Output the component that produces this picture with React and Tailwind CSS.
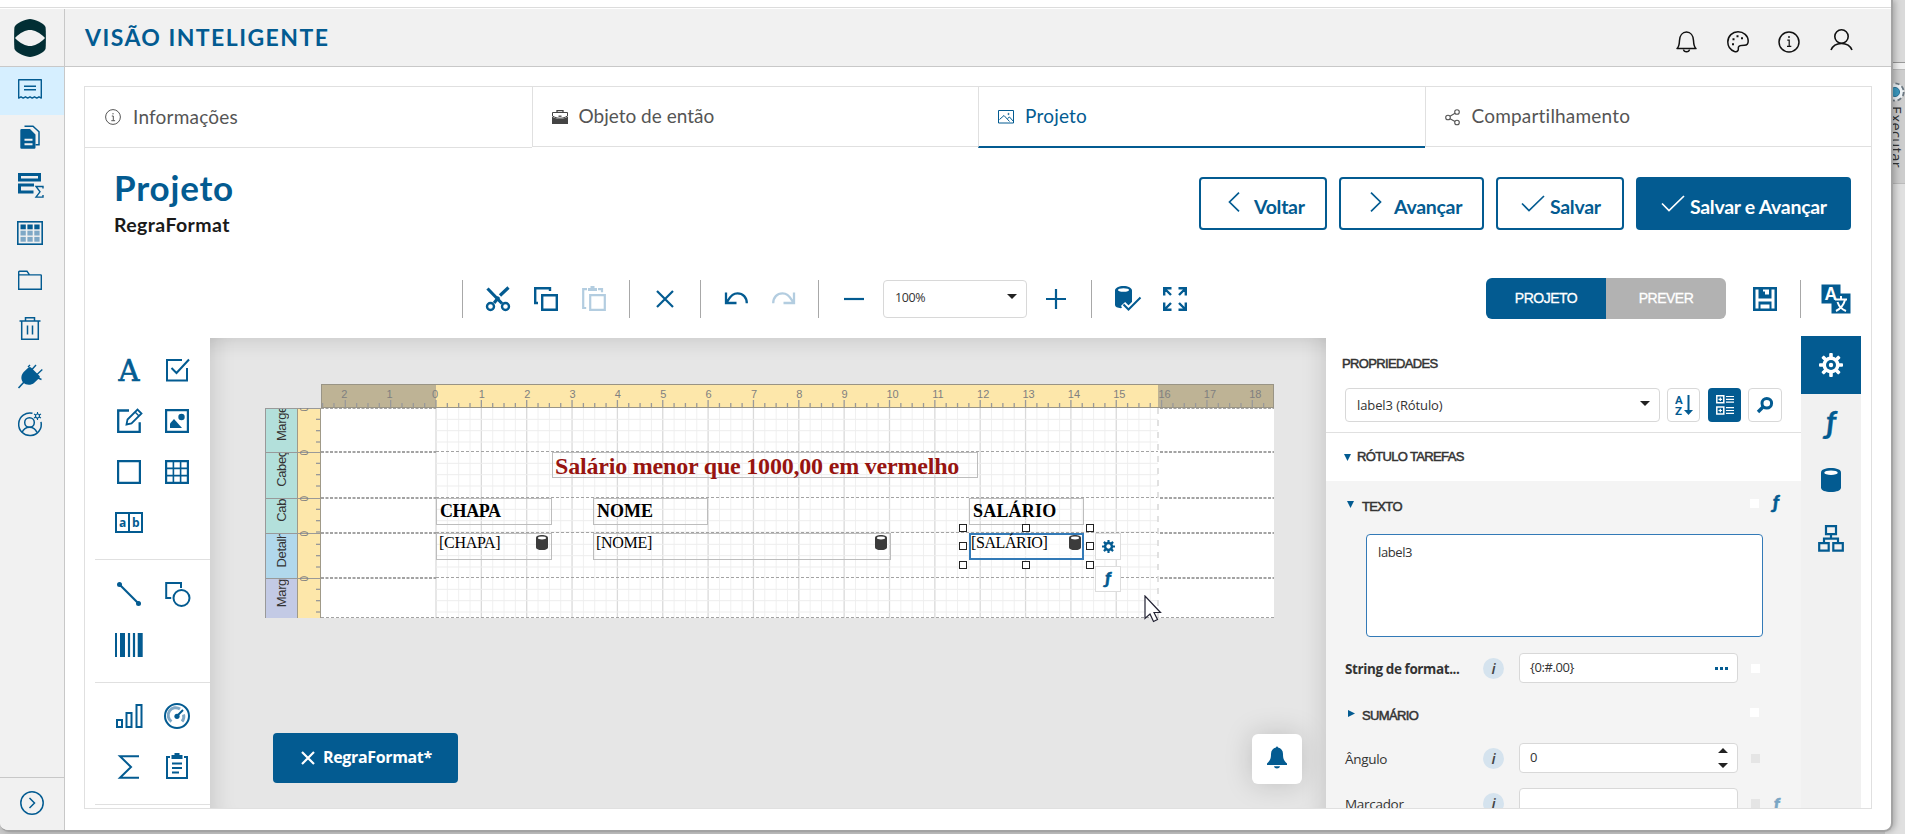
import { useState } from "react";

const BLUE = "#035b91";
const CM = 45.35;

const Icon = ({ size = 24, w, h, color = BLUE, stroke = 2, children, className = "" }) => (
  <svg
    width={w || size}
    height={h || size}
    viewBox={`0 0 ${w || size} ${h || size}`}
    fill="none"
    stroke={color}
    strokeWidth={stroke}
    className={`shrink-0 overflow-visible ${className}`}
  >
    {children}
  </svg>
);

const Fx = ({ className }) => (
  <span className={`font-['Lato'] italic leading-none select-none ${className}`}>ƒ</span>
);

const Database = ({ w = 18, h = 24, color = BLUE, lid = "#fff" }) => (
  <svg width={w} height={h} viewBox="0 0 18 24" preserveAspectRatio="none" className="shrink-0">
    <path d="M0 4.5C0 1.6 4 0 9 0s9 1.6 9 4.5v15c0 3-4 4.5-9 4.5s-9-1.5-9-4.5z" fill={color} />
    <ellipse cx="9" cy="4.7" rx="6" ry="2.3" fill={lid} />
  </svg>
);

/* ---------- left sidebar ---------- */

const sideIcons = [
  <Icon key="receipt" stroke={1.4}>
    <path d="M.7 2.7h22.600v18.400l-2.300-1.300-2.200 1.300-2.300-1.300-2.300 1.300-2.200-1.300-2.300 1.300-2.200-1.300-2.300 1.300-2.200-1.300-2.300 1.300z" strokeLinejoin="round" />
    <path d="M6 9.300h12M6 12.800h12" />
  </Icon>,
  <Icon key="docs" stroke={1.5}>
    <path d="M6.500 1.300h8.500l6 5.500v13h-3.500" />
    <path d="M3.500 4h8.500l5.500 5.500v13a1.200 1.200 0 0 1-1.200 1.200h-12.800a1.200 1.200 0 0 1-1.200-1.200v-17.300a1.200 1.200 0 0 1 1.200-1.200z" fill={BLUE} stroke="none" />
    <path d="M6.500 14.700h8M6.500 19.200h8" stroke="#f1f1f1" strokeWidth="2" />
  </Icon>,
  <Icon key="summary" w={28} h={26}>
    <path d="M3.500 2.500h20v5.500h-20z" strokeWidth="3" />
    <path d="M18 13h-14.500v7h14" strokeWidth="3" />
    <path d="M27 16.500v-2h-7l4 5.300-4 5.300h7v-2" strokeWidth="1.400" />
  </Icon>,
  <Icon key="table" w={26} h={24} stroke={1.6}>
    <rect x=".8" y=".8" width="24.400" height="22.400" />
    {[0, 1, 2].map((r) =>
      [0, 1, 2].map((c) => (
        <rect key={`${r}${c}`} x={3.500 + c * 6.900} y={3.500 + r * 6.200} width="5.300" height="4.800" fill={r ? "#7fa8c6" : BLUE} stroke="none" />
      ))
    )}
  </Icon>,
  <Icon key="folder" stroke={1.4}>
    <path d="M.7 21.300v-17.400a.6.6 0 0 1 .6-.6h7.700l2.500 3.600h11.300a.5.5 0 0 1 .5.5v13.900z M.7 6.900h11" />
  </Icon>,
  <Icon key="trash" stroke={1.5}>
    <path d="M1.500 5h21M7.500 5v-3.300h9v3.300M3.700 5v18.200h16.600v-18.200M9.500 9.500v9M14.500 9.500v9" />
  </Icon>,
  <Icon key="plug" stroke={1.6}>
    <path d="M.5 24l6-6.500" />
    <path d="M10.500 3.500c1-1 2-.6 2.800.2l8 8c.8.8.7 1.600 0 2.400l-5 4.700c-3 2.700-8.300 2.800-11-.2-2.800-3-2.400-7.700.4-10.600z" fill={BLUE} stroke="none" />
    <path d="M13.500 6l4.500-5M19 10.500l5.300-5M20 14l3.500 1.500M10 3l2-2" strokeWidth="1.400" />
  </Icon>,
  <Icon key="user" stroke={1.5}>
    <path d="M14.500 1.300a11.300 11.300 0 1 0 8.500 8.500" />
    <circle cx="11.500" cy="10.500" r="4.800" />
    <path d="M4 20.500c1.500-3.500 4-5.200 7.500-5.200s6 1.700 7.500 5.200" />
    <path d="M19.500 0v8M16 2l7 4M23 2l-7 4" strokeWidth="1.100" />
    <circle cx="19.500" cy="4" r="2" fill="#f1f1f1" strokeWidth="1.200" />
  </Icon>,
];

const Sidebar = () => (
  <aside className="flex w-[65px] shrink-0 flex-col border-r border-[#c8c8c8] bg-[#f1f1f1]">
    <div className="flex h-[58px] shrink-0 justify-center border-b border-[#c8c8c8] pt-[10px] pr-1">
      <svg width="32" height="38" viewBox="0 0 32 38">
        <path d="M16 0c4 0 14 4 15.500 8 .5 2 .5 20 0 22-1.500 4-11.500 8-15.500 8s-14-4-15.500-8c-.5-2-.5-20 0-22 1.500-4 11.500-8 15.500-8z" fill="#022e34" />
        <path d="M1 19c5-5.500 11-8 15-8s10 2.500 15 8c-5 5.500-11 8-15 8s-10-2.500-15-8z" fill="#f1f1f1" />
      </svg>
    </div>
    {sideIcons.map((icon, i) => (
      <div
        key={i}
        className={`flex h-12 shrink-0 items-center justify-center pr-1 ${i > 3 ? "pb-[6px]" : "pb-[4px]"} ${i === 0 ? "bg-[#d6efff]" : ""}`}
      >
        {icon}
      </div>
    ))}
    <div className="mt-auto flex h-[53px] items-center justify-center border-t border-[#c8c8c8] pb-[2px]">
      <Icon stroke={1.5}>
        <circle cx="12" cy="12" r="11.200" />
        <path d="M9.500 7l5 5-5 5" />
      </Icon>
    </div>
  </aside>
);

/* ---------- header ---------- */

const Header = () => (
  <header className="flex h-[58px] shrink-0 items-center border-b border-[#c8c8c8] bg-[#f1f1f1] pl-5">
    <h1 className="pb-[1px] font-['Lato'] text-[23px] leading-none font-bold tracking-[1.45px] text-[#035b91]">VISÃO INTELIGENTE</h1>
    <div className="mr-[38px] ml-auto flex items-start gap-[29px] pt-[9px]">
      <Icon w={22} h={22} color="#111" stroke={1.500}>
        <path d="M1 17.500c2-1.500 2.300-3.500 2.500-8 .2-5 3-8.500 7-8.500s6.800 3.500 7 8.500c.2 4.500.5 6.500 2.500 8z" strokeLinejoin="round" />
        <path d="M7.500 18.500c.5 3 5.500 3 6 0" />
      </Icon>
      <Icon w={22} h={22} color="#111" stroke={1.500}>
        <path d="M7.500 20.500c-4-1.500-6.700-5-6.700-9.500 0-6 4.700-10.200 10.200-10.200s10.200 3.700 10.200 9.200c0 3.500-1.200 4.300-3.700 4.300-3 0-5.500.2-6 1.700-.5 1.500.3 2.500-.7 3.800-.8 1-2 1.100-3.300.7z" />
        <path d="M5 13.200h2M5.500 8.200h2M9.500 5.200h2M14 7.200h2" strokeWidth="2" />
      </Icon>
      <Icon w={22} h={22} color="#111" stroke={1.500}>
        <circle cx="11" cy="11" r="10" />
        <path d="M9.300 9.200h1.900v6M9 15.300h4.300" strokeWidth="1.200" />
        <circle cx="11" cy="6" r=".7" fill="#111" strokeWidth=".6" />
      </Icon>
      <Icon w={24} h={22} color="#111" stroke={1.600} className="-mt-0.5">
        <circle cx="12.500" cy="7.500" r="6.700" />
        <path d="M2 21c2-5 6-6.500 10.500-6.500s8.500 1.500 10.500 6.500" />
      </Icon>
    </div>
  </header>
);

/* ---------- wizard tabs ---------- */

const tabs = [
  {
    label: "Informações",
    icon: (
      <Icon size={16} color="#555" stroke={1}>
        <circle cx="8" cy="8" r="7.400" />
        <path d="M6.800 7h1.500v4.500M6.300 11.700h3.800M8 4v1.400" />
      </Icon>
    ),
  },
  {
    label: "Objeto de então",
    icon: (
      <Icon size={16} color="#444" stroke={1.300}>
        <path d="M5 4v-2.300h6v2.300" />
        <path d="M.5 3.500h15v3.500c-2.500 1.500-4.500 2.200-7.500 2.200s-5-.7-7.500-2.200z" strokeWidth="1" />
        <path d="M6.500 7.200h3" />
        <path d="M0 7.500c3 1.800 5 2.400 8 2.400s5-.6 8-2.400v7.500h-16z" fill="#444" stroke="none" />
      </Icon>
    ),
  },
  {
    label: "Projeto",
    active: true,
    icon: (
      <Icon size={16} stroke={1}>
        <path d="M.5 1.500h15v12.500h-15zM1.500 10.500l4.500-4 5.500 6M9.500 9.500l2-1.500 4 4.500" />
        <circle cx="10.500" cy="5" r=".6" />
      </Icon>
    ),
  },
  {
    label: "Compartilhamento",
    icon: (
      <Icon size={16} color="#555" stroke={1.100}>
        <circle cx="3" cy="8.500" r="2.300" />
        <circle cx="12" cy="3" r="2.300" />
        <circle cx="12" cy="13.500" r="2.300" />
        <path d="M5 7.300l5-3M5 9.700l5 2.800" />
      </Icon>
    ),
  },
];

const Tabs = () => (
  <nav className="flex h-[61px] shrink-0 items-start">
    {tabs.map((tab, i) => (
      <div
        key={tab.label}
        className={`flex flex-1 items-center font-['Lato'] text-[19px] ${
          tab.active ? "h-[61px] border-b-2 border-b-[#035b91] text-[#035b91]" : "border-b border-[#e0e0e0] text-[#555]"
        } ${i === 0 ? "h-[61px] gap-3 pl-5" : "gap-[11px] border-l border-l-[#e0e0e0] pl-[19px]"} ${i % 2 ? "h-[60px]" : ""} ${
          i === 1 ? "tracking-normal" : "tracking-[0.2px]"
        }`}
      >
        {tab.icon}
        <span>{tab.label}</span>
      </div>
    ))}
  </nav>
);

const Check = ({ color }) => (
  <Icon w={24} h={17} color={color} stroke={1.700}>
    <path d="M1 8.500l7 7L23 1" />
  </Icon>
);

const Heading = () => (
  <div className="flex h-[113px] shrink-0 justify-between pr-5 pl-[29px]">
    <div className="pt-[19px]">
      <h2 className="font-['Lato'] text-[35px] leading-[40px] font-bold tracking-[0.8px] text-[#035b91]">Projeto</h2>
      <p className="mt-[6px] font-['Lato'] text-[19.500px] leading-6 font-bold tracking-[0.4px] text-[#1a1a1a]">RegraFormat</p>
    </div>
    <div className="flex gap-3 pt-[29px] font-['Lato'] text-[19.500px] font-bold tracking-[-0.3px] text-[#035b91]">
      <button className="flex h-[53px] w-32 items-center rounded border-2 border-[#035b91] pl-[27px]">
        <Icon w={12} h={20} stroke={1.700} className="-mt-[3px]">
          <path d="M11 .7L1.500 10l9.500 9.300" />
        </Icon>
        <span className="ml-[14px] pt-[6px]">Voltar</span>
      </button>
      <button className="flex h-[53px] w-[145px] items-center rounded border-2 border-[#035b91] pl-[29px]">
        <Icon w={12} h={20} stroke={1.700} className="-mt-[3px]">
          <path d="M1 .7L10.500 10L1 19.300" />
        </Icon>
        <span className="ml-[12px] pt-[6px]">Avançar</span>
      </button>
      <button className="flex h-[53px] w-32 items-center rounded border-2 border-[#035b91] pl-[23px]">
        <Check />
        <span className="ml-[5px] pt-[6px]">Salvar</span>
      </button>
      <button className="flex h-[53px] w-[215px] items-center rounded bg-[#035b91] pl-[25px] text-white">
        <Check color="#fff" />
        <span className="ml-[5px] pt-[6px]">Salvar e Avançar</span>
      </button>
    </div>
  </div>
);

/* ---------- designer toolbar ---------- */

const Sep = ({ className = "mx-[23px]" }) => <span className={`h-[38px] w-px shrink-0 bg-[#a8a8a8] ${className}`} />;

const Toolbar = ({ mode, setMode }) => (
  <div className="flex h-[75px] shrink-0 items-center">
    <Sep className="mr-[23px] ml-[377px]" />
    <Icon stroke={2.400}>
      <path d="M1.500 1.500L16 16.500M22.500 .5L14 8.500" strokeWidth="3.200" />
      <path d="M13 10L8 16" strokeWidth="3.200" />
      <circle cx="4.500" cy="19.500" r="3.500" />
      <circle cx="19.500" cy="19.500" r="3.500" />
    </Icon>
    <Icon className="ml-6" stroke={2.400}>
      <path d="M16 4v-2.800h-14.800v14.800h2.800" />
      <path d="M8.200 8.200h14.600v14.600h-14.600z" />
    </Icon>
    <Icon className="ml-6" color="#b3cde0" stroke={2.200}>
      <path d="M5 2.200h-3.800v18.800h3M16 2.200h4v3M8.200 8.200h14.600v14.600h-14.600z" />
      <path d="M6 1h2.500v-2h4v2h2.500v3h-9z" fill="#b3cde0" stroke="none" />
    </Icon>
    <Sep />
    <Icon stroke={2.200}>
      <path d="M4 4l16 16M20 4L4 20" />
    </Icon>
    <Sep />
    <Icon stroke={2.300}>
      <path d="M2 5.500v10.500h10.500M3 15c4.500-7.500 7-8.600 10.500-8.600 5.500 0 9.300 4 9.300 9.900" />
    </Icon>
    <Icon className="ml-6" color="#b3cde0" stroke={2.300}>
      <path d="M22 5.500v10.500h-10.500M21 15c-4.500-7.500-7-8.600-10.500-8.600-5.500 0-9.300 4-9.300 9.900" />
    </Icon>
    <Sep className="mr-[23px] ml-[22px]" />
    <Icon stroke={2.200}>
      <path d="M2 12h20" />
    </Icon>
    <div className="ml-[17px] flex h-[38px] w-36 items-center justify-between rounded border border-[#d8d8d8] pr-[9px] pl-[11px] font-['Open_Sans'] text-[12.500px] tracking-[-0.4px] text-[#333]">
      <span>100%</span>
      <svg width="10" height="5" className="-mt-1">
        <path d="M0 0h10l-5 5z" fill="#222" />
      </svg>
    </div>
    <Icon className="ml-[17px]" stroke={2.200}>
      <path d="M2 12h20M12 2v20" />
    </Icon>
    <Sep />
    <Icon w={26} h={24}>
      <path d="M0 3.500C0 1 4 -1 8.500 -1s8.500 2 8.500 4.500v13l-4 4-3-3-4 3.800c-3.500-.5-6-1.500-6-3.300z" fill={BLUE} stroke="none" />
      <ellipse cx="8.500" cy="3" rx="5.500" ry="1.800" fill="#fff" stroke="none" />
      <path d="M8 17l5.500 5.500 12-12" strokeWidth="6" stroke="#fff" />
      <path d="M8.500 17.500l5 5 12-12" />
    </Icon>
    <Icon className="ml-[22px]" stroke={2.400}>
      <path d="M1.200 8.500v-7.300h7.300M2 2l6 6M22.800 8.500v-7.300h-7.300M22 2l-6 6M1.200 15.500v7.300h7.300M2 22l6-6M22.800 15.500v7.300h-7.300M22 22l-6-6" />
    </Icon>
    <div className="ml-[299px] flex h-[41px] w-60 overflow-hidden rounded-md font-['Liberation_Sans'] text-[14px] tracking-[-0.5px] text-white [-webkit-text-stroke:0.3px_#fff]">
      <button className="flex-1 bg-[#035b91]" onClick={() => setMode("projeto")} aria-pressed={mode === "projeto"}>
        PROJETO
      </button>
      <button className="flex-1 bg-[#b2b2b2]" onClick={() => setMode("prever")} aria-pressed={mode === "prever"}>
        PREVER
      </button>
    </div>
    <Icon className="ml-[27px]">
      <path d="M0 0h24v24h-24z" fill={BLUE} stroke="none" />
      <path d="M2.500 2.500h3v9h13v-9h3v19h-3v-7h-13v7h-3z" fill="#fff" stroke="none" />
      <path d="M10 2.500h6v5h-4v-3h-2zM7.500 17.500h9v4h-9z" fill="#fff" stroke="none" />
    </Icon>
    <Sep className="mr-5 ml-[23px]" />
    <svg width="30" height="30" viewBox="0 0 30 30">
      <path d="M.5 .5h19v9h10v20h-19v-10h-10z" fill={BLUE} />
      <text x="9.800" y="15.500" textAnchor="middle" fontFamily="Liberation Sans" fontWeight="bold" fontSize="17.500" fill="#fff">A</text>
      <path d="M14 15.500h12M20 12v3M24 16c-1.500 5.500-5 9-9 11M16.500 18c1.500 4.500 4.500 7.500 8.500 9" fill="none" stroke="#fff" strokeWidth="2" />
    </svg>
  </div>
);

/* ---------- palette ---------- */

const palette = [
  [
    <svg key="label" width="24" height="24" viewBox="0 0 24 24" className="overflow-visible">
      <text x="12" y="22.500" textAnchor="middle" fontFamily="DejaVu Serif" fontSize="29" fill={BLUE} stroke={BLUE} strokeWidth=".7">A</text>
    </svg>,
    <Icon key="check">
      <path d="M17 2h-15v20.500h20v-12.500" />
      <path d="M6.500 10l5 5L24 1.500" />
    </Icon>,
    <Icon key="edit">
      <path d="M12 1.500h-10.800v21.300h21.500v-9.500" strokeWidth="2.300" />
      <path d="M9.500 15.500l1-5L20.500 .5l4 4-10 10z" strokeWidth="1.800" />
      <path d="M18 3l4 4" strokeWidth="1.500" />
    </Icon>,
    <Icon key="image" stroke={2.200}>
      <path d="M1.100 1.100h21.800v21.800h-21.800z" />
      <path d="M5 19v-4.500l4-4.500 8 9z" fill={BLUE} stroke="none" />
      <circle cx="16.500" cy="8" r="3.200" fill={BLUE} stroke="none" />
    </Icon>,
    <Icon key="panel" stroke={2.200}>
      <path d="M1.100 1.100h21.800v21.800h-21.800z" />
    </Icon>,
    <Icon key="table" stroke={2.200}>
      <path d="M1.100 1.100h21.800v21.800h-21.800z" />
      <path d="M8.400 1v22M15.600 1v22M1 8.400h22M1 15.600h22" strokeWidth="1.600" />
    </Icon>,
    <svg key="comb" width="28" height="21" viewBox="0 0 28 21">
      <path d="M1 1h26v19h-26zM14 1v19" fill="none" stroke={BLUE} strokeWidth="2" />
      <text x="4" y="15" fontFamily="Open Sans" fontWeight="bold" fontSize="12" fill={BLUE}>a</text>
      <text x="17" y="15" fontFamily="Open Sans" fontWeight="bold" fontSize="12" fill={BLUE}>b</text>
    </svg>,
  ],
  [
    <Icon key="line">
      <path d="M2.500 2.500l19 19" strokeWidth="2.200" />
      <circle cx="2.500" cy="2.500" r="2.500" fill={BLUE} stroke="none" />
      <circle cx="21.500" cy="21.500" r="2.500" fill={BLUE} stroke="none" />
    </Icon>,
    <Icon key="shape">
      <path d="M16 6v-5h-14.800v15h5" />
      <circle cx="16.500" cy="16" r="8" />
    </Icon>,
    <Icon key="barcode" w={28}>
      <path d="M1 0v24" strokeWidth="2" />
      <path d="M7.500 0v24" strokeWidth="5" />
      <path d="M14 0v24M19 0v24" strokeWidth="2.200" />
      <path d="M25.200 0v24" strokeWidth="5" />
    </Icon>,
  ],
  [
    <Icon key="chart" w={28}>
      <path d="M2 16h5v7h-5zM11.500 9h5v14h-5zM21.500 1h5v22h-5z" />
    </Icon>,
    <Icon key="gauge" size={26}>
      <circle cx="13" cy="13" r="12" />
      <path d="M7.500 18.500a7.300 7.300 0 0 1 8.500-12.500M19.500 11.500a7.300 7.300 0 0 1-1.500 7" stroke="#7fa8c6" strokeWidth="3" />
      <path d="M13 13l6-6" />
      <circle cx="13" cy="13.300" r="2.600" fill={BLUE} stroke="none" />
    </Icon>,
    <Icon key="sum">
      <path d="M22 1.200h-19l11 10.800-11 10.800h19" />
    </Icon>,
    <Icon key="toc" h={27} w={24}>
      <path d="M5 4h-3v21h20v-21h-3" />
      <path d="M6.500 2h3v-2h5v2h3v4h-11z" fill={BLUE} stroke="none" />
      <path d="M7 10.500h10M7 15h10M7 19.500h7" />
    </Icon>,
  ],
];

const Palette = () => (
  <div className="w-[125px] shrink-0 overflow-hidden pl-[10px]">
    {palette.map((group, i) => (
      <div
        key={i}
        className={`grid grid-cols-[48px_48px] auto-rows-[51px] border-b border-[#e0e0e0] pl-[10px] ${i === 2 ? "pt-[7px]" : "pt-2"} ${
          i > 0 ? "pb-3" : "pb-[11px]"
        }`}
      >
        {group.map((icon, j) => (
          <div key={j} className="flex items-center justify-center">
            {icon}
          </div>
        ))}
      </div>
    ))}
  </div>
);

/* ---------- report surface ---------- */

const ZERO = 115;
const RIGHT = 837;

const HorizontalRuler = () => {
  const ticks = [];
  for (let i = -10; i <= 73; i++) ticks.push(i);
  return (
    <svg width="953" height="24" className="ml-14 block">
      <rect width="953" height="24" fill="#beb395" />
      <rect x={ZERO} width={RIGHT - ZERO} height="24" fill="#fde7aa" />
      {ticks.map((i) => (
        <line key={i} x1={ZERO + (i * CM) / 4} x2={ZERO + (i * CM) / 4} y1={i % 4 ? 19 : 16} y2="24" stroke="#999" strokeWidth="1.300" />
      ))}
      {Array.from({ length: 21 }, (_, k) => k - 2).map((n) => (
        <text
          key={n}
          x={ZERO + n * CM + (n > 9 ? 3 : n <= 0 ? -1 : 0.5)}
          y="14"
          textAnchor="middle"
          fontFamily="Liberation Sans"
          fontSize="11"
          fill="#808080"
        >
          {Math.abs(n)}
        </text>
      ))}
      <rect x=".5" y=".5" width="952" height="23" fill="none" stroke="#999485" />
    </svg>
  );
};

const bands = [
  { name: "Marge", top: 0, h: 44, fill: "bg-[#b3e0db]" },
  { name: "Cabeç", top: 44, h: 46, fill: "bg-[#b3e0db]" },
  { name: "Cabe", top: 90, h: 35, fill: "bg-[#b3e0db]" },
  { name: "Detalh", top: 125, h: 45, fill: "bg-[#b1d8ec]" },
  { name: "Marg", top: 170, h: 40, fill: "bg-[#c3cae5]" },
];

const BandTitles = () => (
  <div className="flex w-8 flex-col">
    {bands.map((b, i) => (
      <div
        key={i}
        className={`flex items-end justify-center overflow-hidden border-t border-l border-[#999] pb-[11px] ${b.fill}`}
        style={{ height: b.h }}
      >
        <span className="shrink-0 rotate-180 font-['Liberation_Sans'] text-[13px] leading-none tracking-[-0.35px] whitespace-nowrap text-[#333] [writing-mode:vertical-rl]">
          {b.name}
        </span>
      </div>
    ))}
  </div>
);

const VerticalRuler = () => (
  <svg width="24" height="210">
    <rect width="24" height="210" fill="#fde7aa" />
    {bands.map((b) => (
      <g key={b.top}>
        <line x1="0" x2="24" y1={b.top + 0.5} y2={b.top + 0.5} stroke="#999" />
        {[1, 2, 3].map((k) => (
          <line key={k} x1="19" x2="24" y1={b.top + (k * CM) / 4} y2={b.top + (k * CM) / 4} stroke="#999" strokeWidth="1.300" />
        ))}
        <text transform={`translate(11 ${b.top + 3.5}) rotate(-90)`} fontFamily="Liberation Sans" fontSize="10" fill="#808080">
          0
        </text>
      </g>
    ))}
    <path d="M.5 0v210M23.500 0v210" stroke="#a09a88" />
  </svg>
);

const Grid = () => (
  <svg width="953" height="210" className="bg-white">
    {Array.from({ length: 64 }, (_, i) => (
      <line
        key={i}
        x1={ZERO + (i * CM) / 4}
        x2={ZERO + (i * CM) / 4}
        y1="0"
        y2="210"
        stroke={i % 4 ? "#f0f0f0" : "#dadada"}
        strokeWidth={i % 4 ? 1 : 1.300}
      />
    ))}
    {bands.map((b) =>
      [1, 2, 3].map((k) => {
        const y = b.top + (k * CM) / 4;
        return <line key={`${b.top}-${k}`} x1={ZERO} x2={RIGHT} y1={y} y2={y} stroke="#ededed" />;
      })
    )}
    {bands.map(({ top: y }) => (
      <g key={y} stroke="#a3a3a3">
        <path d={`M0 ${y}H${ZERO}M${RIGHT + 2} ${y}H953`} strokeWidth="2" strokeDasharray="3 1.500" />
        {y > 0 && <path d={`M${ZERO} ${y - 0.5}H${RIGHT}`} strokeDasharray="3 2" />}
      </g>
    ))}
    <path d="M0 209.500H953" stroke="#a3a3a3" strokeDasharray="3 2" />
    <path d={`M${RIGHT} 0V210`} stroke="#d8d8d8" strokeWidth="1.500" strokeDasharray="6 6" />
  </svg>
);

const fields = [
  { text: "Salário menor que 1000,00 em vermelho", box: "left-[287px] top-[68px] w-[426px] h-[26px]", font: "pl-[2px] text-[24px] leading-[26px] font-bold tracking-[-0.2px] text-[#971410]" },
  { text: "CHAPA", box: "left-[171px] top-[114px] w-[116px] h-[27px]", font: "pl-[3px] text-[18px] leading-[25px] font-bold tracking-[-0.4px]" },
  { text: "NOME", box: "left-[328px] top-[114px] w-[115px] h-[27px]", font: "pl-[3px] text-[18px] leading-[25px] font-bold" },
  { text: "SALÁRIO", box: "left-[704px] top-[114px] w-[115px] h-[27px]", font: "pl-[3px] text-[18px] leading-[25px] font-bold tracking-[0.2px]" },
  { text: "[CHAPA]", data: true, box: "left-[171px] top-[149px] w-[116px] h-[27px]", font: "pl-[2px] text-[16px] leading-[17px] tracking-[-0.3px]" },
  { text: "[NOME]", data: true, box: "left-[328px] top-[149px] w-[298px] h-[27px]", font: "pl-[2px] text-[16px] leading-[17px] tracking-[-0.3px]" },
  { text: "[SALÁRIO]", data: true, selected: true, box: "left-[704px] top-[149px] w-[115px] h-[27px]", font: "pl-0 text-[16px] leading-[15px] tracking-[-0.4px]" },
];

const handles = [
  "left-[694px] top-[140px]",
  "left-[757px] top-[140px]",
  "left-[821px] top-[140px]",
  "left-[694px] top-[158px]",
  "left-[821px] top-[158px]",
  "left-[694px] top-[177px]",
  "left-[757px] top-[177px]",
  "left-[821px] top-[177px]",
];

const Gear = ({ size = 24, color = "#fff", hole = BLUE }) => (
  <svg width={size} height={size} viewBox="0 0 24 24">
    <g fill={color}>
      {[0, 45, 90, 135].map((a) => (
        <rect key={a} x="10" y="0" width="4" height="24" rx=".6" transform={`rotate(${a} 12 12)`} />
      ))}
      <circle cx="12" cy="12" r="8.600" />
    </g>
    <circle cx="12" cy="12" r="4" fill={hole} />
  </svg>
);

const Surface = () => (
  <div className="relative mt-0.5 w-[1116px] shrink-0 overflow-hidden bg-[#e6e6e6] shadow-[inset_0_24px_20px_-20px_rgba(0,0,0,0.12),inset_24px_0_22px_-20px_rgba(0,0,0,0.12),inset_-24px_0_22px_-20px_rgba(0,0,0,0.12)]">
    <div className="relative mt-[46px] ml-[55px] w-[1009px]">
      <HorizontalRuler />
      <div className="flex">
        <BandTitles />
        <VerticalRuler />
        <Grid />
      </div>
      {fields.map((f) => (
        <div
          key={f.text}
          className={`absolute font-['Liberation_Serif'] whitespace-nowrap ${f.box} ${f.font} ${
            f.selected ? "border-2 border-[#337ab7] bg-white/60" : "border border-[#bdbdbd]"
          }`}
        >
          {f.text}
          {f.data && (
            <span className={`absolute ${f.selected ? "top-0 right-[1px]" : "top-[1px] right-[3px]"}`}>
              <Database w={12} h={15} color="#3c3c3c" />
            </span>
          )}
        </div>
      ))}
      {handles.map((pos) => (
        <span key={pos} className={`absolute h-2 w-2 border border-[#222] bg-white ${pos}`} />
      ))}
      <span className="absolute top-[149px] left-[830px] flex h-[27px] w-[26px] items-center justify-center border border-[#ddd] bg-white">
        <Gear size={13} color={BLUE} hole="#fff" />
      </span>
      <span className="absolute top-[182px] left-[830px] flex h-[26px] w-[26px] items-center justify-center border border-[#ddd] bg-white pb-[3px]">
        <Fx className="text-[17px] font-black text-[#035b91] [-webkit-text-stroke:0.6px_#035b91]" />
      </span>
      <svg width="18" height="28" viewBox="0 0 18 28" className="absolute top-[211px] left-[879px]">
        <path d="M1 1v22.500l5-4.500 3.500 7.500 4-2-3.500-7h6.500z" fill="#fff" stroke="#223" strokeWidth="1.200" />
      </svg>
    </div>

    <div className="absolute bottom-[25px] left-[63px] flex h-[50px] w-[185px] items-center rounded bg-[#035b91] pl-7 text-white">
      <Icon size={14} color="#fff" stroke={2.200}>
        <path d="M1 1l12 12M13 1L1 13" />
      </Icon>
      <span className="ml-[8px] pb-[3px] font-['Open_Sans'] text-[16px] font-bold tracking-[-0.35px]">RegraFormat*</span>
    </div>
    <div className="absolute right-6 bottom-[24px] flex h-[50px] w-[50px] items-center justify-center rounded-md bg-white shadow-[0_0_28px_rgba(0,0,0,0.17)]">
      <svg width="20" height="23" viewBox="0 0 20 23" className="-mt-[3px]">
        <path d="M9 1.500a1 1 0 0 1 2 0c3 .7 5 3 5 6.500 0 5 1 6.500 4 9.500v1.500h-20v-1.500c3-3 4-4.500 4-9.500 0-3.500 2-5.800 5-6.500zM7 20.300h6c-.5 3-5.500 3-6 0z" fill={BLUE} />
      </svg>
    </div>
  </div>
);

/* ---------- properties ---------- */

const Triangle = ({ open }) => (
  <svg width="7" height="7" className="shrink-0">
    <path d={open ? "M0 0h7l-3.500 7z" : "M0 0l7 3.500l-7 3.500z"} fill={BLUE} />
  </svg>
);

const SectionTitle = ({ children, className }) => (
  <span className={`font-['Liberation_Sans'] text-[13px] tracking-[-0.65px] text-[#333] [-webkit-text-stroke:0.5px_#333] ${className}`}>{children}</span>
);

const Row = ({ label, bold, value, children, box = "bg-white", fx }) => (
  <div className="flex h-[30px] shrink-0 items-center pl-[19px]">
    <span className={`w-[138px] pt-[2px] text-[13.500px] text-[#333] ${bold ? "font-bold tracking-[-0.4px]" : "tracking-[-0.3px]"}`}>{label}</span>
    <span className="flex h-[21px] w-[21px] items-center justify-center rounded-full bg-[#d5e3ee] font-['Open_Sans'] text-[15px] font-semibold text-[#444] italic">
      i
    </span>
    <div className="ml-[15px] flex h-[30px] w-[219px] items-center justify-between rounded border border-[#d8d8d8] bg-white pr-[9px] pl-[10px] text-[13px] tracking-[-0.4px] text-[#333]">
      <span>{value}</span>
      {children}
    </div>
    <span className={`ml-[13px] h-[9px] w-[9px] ${box}`} />
    {fx && <Fx className="ml-[14px] text-[17px] font-black text-[#7aa6c4] [-webkit-text-stroke:0.6px_#7aa6c4]" />}
  </div>
);

const Properties = () => (
  <section className="flex w-[475px] shrink-0 flex-col overflow-hidden bg-white font-['Open_Sans']">
    <div className="flex h-[97px] shrink-0 flex-col border-b border-[#e0e0e0]">
      <SectionTitle className="pt-[18px] pl-[16px] leading-5">PROPRIEDADES</SectionTitle>
      <div className="mt-[14px] flex h-[34px] pl-[19px]">
        <div className="flex w-[315px] items-center justify-between rounded border border-[#d8d8d8] pr-[9px] pl-[11px] text-[13px] tracking-[-0.1px] text-[#333]">
          <span className="pt-[2px]">label3 (Rótulo)</span>
          <svg width="10" height="5" className="-mt-1">
            <path d="M0 0h10l-5 5z" fill="#222" />
          </svg>
        </div>
        <button className="ml-[7px] flex w-[33px] items-center justify-center rounded border border-[#d8d8d8]">
          <svg width="18" height="20" viewBox="0 0 18 20">
            <text x="0" y="9" fontFamily="Roboto" fontWeight="bold" fontSize="11.500" fill={BLUE}>A</text>
            <text x="0" y="20" fontFamily="Roboto" fontWeight="bold" fontSize="11.500" fill={BLUE}>Z</text>
            <path d="M13.500 0v16" stroke={BLUE} strokeWidth="2" />
            <path d="M9 15h9l-4.500 5z" fill={BLUE} />
          </svg>
        </button>
        <button className="ml-2 flex w-[33px] items-center justify-center rounded bg-[#035b91]">
          <Icon w={18} h={20} color="#fff" stroke={1.200}>
            <path d="M.8 .8h7v7h-7zM.8 12h7v7h-7z" strokeWidth="1.500" />
            <path d="M2.500 4.300h3.600M4.300 2.500v3.600M2.500 15.500h3.600M4.300 13.700v3.600" />
            <path d="M10 1.500h8M10 4.300h8M10 7.100h8M10 12.700h8M10 15.500h8M10 18.300h8" />
          </Icon>
        </button>
        <button className="ml-[7px] flex w-[34px] items-center justify-center rounded border border-[#d8d8d8]">
          <Icon size={16} stroke={3}>
            <circle cx="9.800" cy="6.200" r="4.800" />
            <path d="M6.500 9.500L1 15" strokeWidth="3.400" />
          </Icon>
        </button>
      </div>
    </div>
    <div className="flex h-12 shrink-0 items-center gap-[6px] pl-[18px]">
      <Triangle open />
      <SectionTitle>RÓTULO TAREFAS</SectionTitle>
    </div>
    <div className="flex flex-1 flex-col overflow-hidden bg-[#f4f4f4]">
      <div className="flex h-[53px] shrink-0 items-center pl-[21px]">
        <span className="-mt-[6px]">
          <Triangle open />
        </span>
        <SectionTitle className="-mt-[2px] ml-2 w-[388px]">TEXTO</SectionTitle>
        <span className="-mt-2 h-[9px] w-[9px] bg-white" />
        <Fx className="-mt-3 ml-[14px] text-[18px] font-black text-[#035b91] [-webkit-text-stroke:0.6px_#035b91]" />
      </div>
      <div className="ml-10 h-[103px] w-[397px] shrink-0 rounded border border-[#337ab7] bg-white pt-[8px] pl-[11px] text-[13px] tracking-[-0.4px] text-[#333]">label3</div>
      <div className="h-4 shrink-0" />
      <Row label="String de format..." bold value="{0:#.00}">
        <svg width="13" height="3">
          <path d="M0 0h3v3h-3zM5 0h3v3h-3zM10 0h3v3h-3z" fill={BLUE} />
        </svg>
      </Row>
      <div className="flex h-[60px] shrink-0 items-center pl-[22px]">
        <Triangle />
        <SectionTitle className="ml-[7px] w-[388px] pt-[5px]">SUMÁRIO</SectionTitle>
        <span className="-mt-[2px] h-[9px] w-[9px] bg-white" />
      </div>
      <Row label="Ângulo" value="0" box="bg-[#e5e5e5]">
        <svg width="10" height="20">
          <path d="M0 5h10l-5-5zM0 15h10l-5 5z" fill="#222" />
        </svg>
      </Row>
      <div className="h-[15px] shrink-0" />
      <Row label="Marcador" value="" box="bg-[#e5e5e5]" fx />
    </div>
  </section>
);

const SideStrip = () => (
  <div className="flex w-[60px] shrink-0 flex-col bg-[#f1f1f1]">
    <div className="flex h-[58px] items-center justify-center bg-[#035b91]">
      <svg width="24" height="24" viewBox="0 0 24 24">
        <g fill="#fff">
          {[0, 45, 90, 135].map((a) => (
            <rect key={a} x="10.200" y="0" width="3.600" height="24" rx="1" transform={`rotate(${a} 12 12)`} />
          ))}
          <circle cx="12" cy="12" r="8.500" />
        </g>
        <circle cx="12" cy="12" r="5" fill={BLUE} />
        <circle cx="12" cy="12" r="2.200" fill="#fff" />
      </svg>
    </div>
    <div className="flex h-[58px] items-center justify-center pb-[5px]">
      <Fx className="text-[30px] font-bold text-[#035b91] [-webkit-text-stroke:0.4px_#035b91]" />
    </div>
    <div className="flex h-[57px] items-center justify-center pb-[2px]">
      <Database w={20} h={24} />
    </div>
    <div className="flex h-[58px] items-center justify-center">
      <Icon w={26} h={27} stroke={2.200}>
        <path d="M8 1.200h10v8h-10zM1.200 18.200h9.500v7.500h-9.500zM15.300 18.200h9.500v7.500h-9.500zM13 9v4.500M6 18v-4.300h14v4.300" />
      </Icon>
    </div>
  </div>
);

/* window that sits behind the main one */
const BackWindow = () => (
  <div className="absolute top-0 right-0 flex h-full w-5 flex-col bg-[#e0e0e0]">
    <div className="h-[63px] shrink-0 border-b border-[#999] bg-[#dadada]" />
    <div className="h-[6px] shrink-0 bg-[#f0f0f0]" />
    <div className="flex h-[115px] shrink-0 flex-col items-end border-y border-[#bbb] bg-[#cdcdcd] pt-[10px]">
      <svg width="22" height="24" viewBox="0 0 24 24" className="mr-[-1px] shrink-0">
        <circle cx="12" cy="12" r="9.500" fill="#eef3f6" stroke="#6b7780" strokeWidth="2" strokeDasharray="4.500 3" />
        <circle cx="12" cy="12" r="5" fill="#3c9ac0" stroke="#2a6f94" />
      </svg>
      <span className="mt-[2px] mr-[2px] font-['Open_Sans'] text-[14.500px] leading-none tracking-[0.4px] text-[#333] [writing-mode:vertical-rl]">Executar</span>
    </div>
  </div>
);

export default function App() {
  const [mode, setMode] = useState("projeto");

  return (
    <div className="relative h-[834px] w-[1905px] overflow-hidden bg-[#c9c9c9]">
      <BackWindow />
      <div className="relative flex h-[832px] w-[1893px] flex-col overflow-hidden rounded-b-[9px] border-r-2 border-b-2 border-[#a3a3a3] bg-white shadow-[2px_0_6px_rgba(0,0,0,0.25)]">
        <div className="mb-px h-2 shrink-0 border-b border-[#dcdcdc]" />
        <div className="flex flex-1">
          <Sidebar />
          <div className="flex flex-1 flex-col">
            <Header />
            <main className="mt-[19px] ml-[19px] flex h-[723px] w-[1788px] flex-col overflow-hidden border border-[#e0e0e0]">
              <Tabs />
              <Heading />
              <Toolbar mode={mode} setMode={setMode} />
              <div className="flex min-h-0 flex-1">
                <Palette />
                <Surface />
                <Properties />
                <SideStrip />
              </div>
            </main>
          </div>
        </div>
      </div>
    </div>
  );
}
